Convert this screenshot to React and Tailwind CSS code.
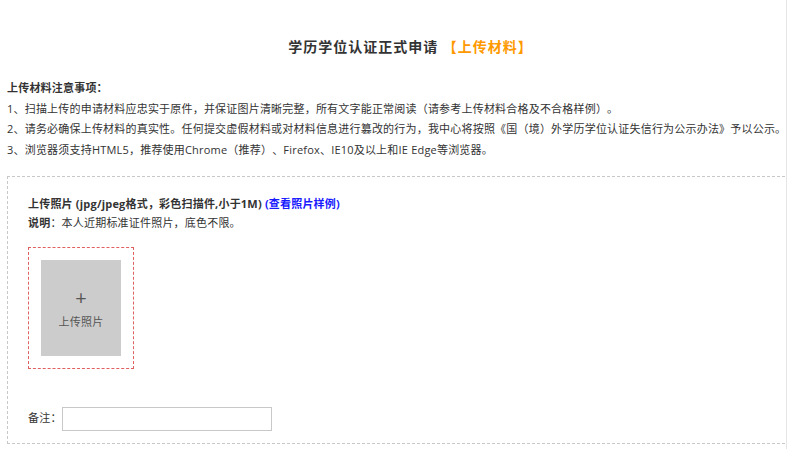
import React from 'react';

const font = { fontFamily: '"Open Sans", "Noto Sans CJK SC", sans-serif' };

export default function App() {
  const notes = [
    '1、扫描上传的申请材料应忠实于原件，并保证图片清晰完整，所有文字能正常阅读（请参考上传材料合格及不合格样例）。',
    '2、请务必确保上传材料的真实性。任何提交虚假材料或对材料信息进行篡改的行为，我中心将按照《国（境）外学历学位认证失信行为公示办法》予以公示。',
    '3、浏览器须支持HTML5，推荐使用Chrome（推荐）、Firefox、IE10及以上和IE Edge等浏览器。',
  ];

  return (
    <div
      className="w-full h-[449px] overflow-hidden bg-white text-[#333] text-[11px] tracking-[0.2px] [text-spacing-trim:space-all] border-r border-[#e5e5e5]"
      style={font}
    >
      <div className="w-[800px] pl-[7px]">
        {/* Title */}
        <div className="pt-[37px] h-[78px] pl-[14px] text-center text-[14px] tracking-[1px] leading-[20px] font-bold">
          学历学位认证正式申请
          <span className="text-[#ff9900]"> 【上传材料】</span>
        </div>

        {/* Notes */}
        <div className="leading-[20px] whitespace-nowrap">
          <div className="font-bold">上传材料注意事项：</div>
          {notes.map((n) => (
            <div key={n} className="mt-[0.5px]">{n}</div>
          ))}
        </div>

        {/* Upload box */}
        <div className="mt-[16px] border border-dashed border-[#c8c8c8] pt-[17px] pb-[12px] pl-[20px]">
          <div className="leading-[20px]">
            <span className="font-bold">上传照片 (jpg/jpeg格式，彩色扫描件,小于1M)</span>{' '}
            <span className="font-bold text-[#1a1aff]">(查看照片样例)</span>
          </div>
          <div className="leading-[18px]">
            <span className="font-bold">说明</span>：本人近期标准证件照片，底色不限。
          </div>

          <div className="mt-[15px] w-[106px] h-[122px] p-[12px] border border-dashed border-[#e06060]">
            <div className="w-[80px] h-[96px] bg-[#cccccc] flex flex-col items-center justify-center text-[#555]">
              <div className="text-[20px] leading-[20px] mt-[2px]">+</div>
              <div className="mt-[6px] leading-[16px]">上传照片</div>
            </div>
          </div>

          <div className="mt-[38px] flex items-center">
            <span>备注：</span>
            <input className="w-[210px] h-[24px] border border-[#c8c8c8] outline-none" />
          </div>
        </div>
      </div>
    </div>
  );
}
